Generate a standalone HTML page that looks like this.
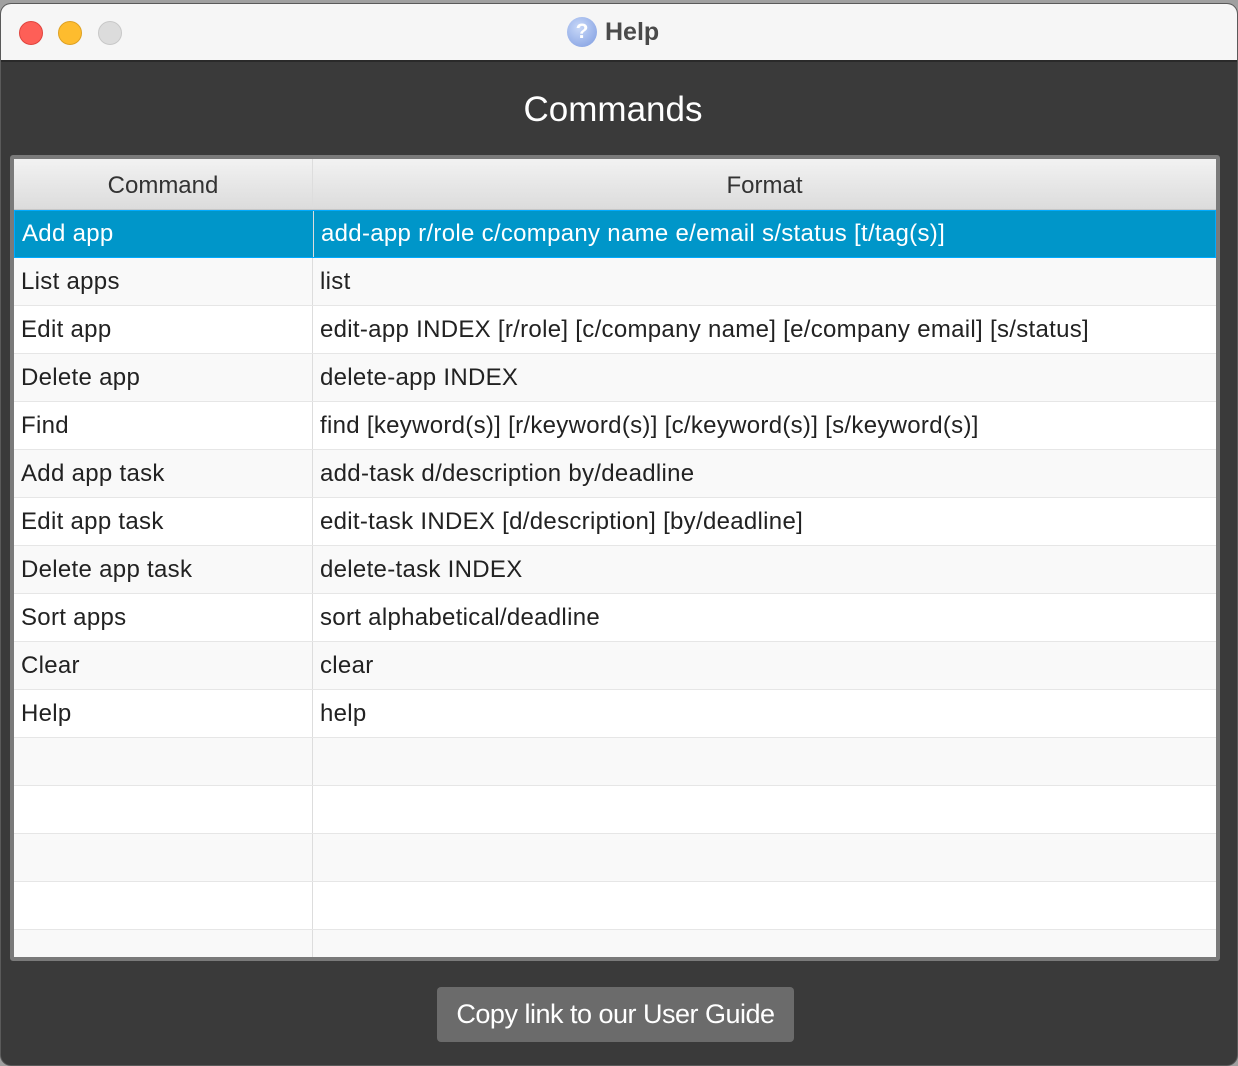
<!DOCTYPE html>
<html><head><style>
*{margin:0;padding:0;box-sizing:border-box}
body{width:1238px;height:1066px;background:#a0a0a0;font-family:"Liberation Sans",sans-serif;overflow:hidden;position:relative}
.win{position:absolute;left:0;top:3px;width:1238px;height:1063px;border-radius:11px;overflow:hidden;background:#3a3a3a;border:1px solid #5a5a5a}
.tb{position:absolute;left:0;top:0;width:100%;height:58px;background:#f6f6f6;border-bottom:2px solid #2a2a2a}
.dot{position:absolute;top:17px;width:24px;height:24px;border-radius:50%}
.title{position:absolute;left:566px;top:13px;font-size:25px;font-weight:bold;color:#4a4a4a;display:flex;align-items:center;gap:8px}
.q{width:30px;height:30px;border-radius:50%;background:radial-gradient(circle at 40% 35%,#c8d8f8,#7d9be0);color:#fff;font-size:21px;display:flex;align-items:center;justify-content:center}
h1{position:absolute;left:-6px;width:100%;top:86px;text-align:center;color:#fff;font-weight:normal;font-size:35px}
.tbl{position:absolute;left:9px;top:151px;width:1210px;height:806px;border:4px solid #7a7a7a;border-radius:3px;background:#f9f9f9;overflow:hidden}
.hd{display:flex;height:51px;background:linear-gradient(#f2f2f2,#dcdcdc);border-bottom:1px solid #c6c6c6}
.hd div{display:flex;align-items:center;justify-content:center;font-size:24px;color:#333;padding-top:4px}
.c1{width:299px;border-right:1px solid #ddd;flex:none}
.c2{flex:1}
.r{display:flex;height:48px;border-bottom:1px solid #e6e6e6;font-size:24px;color:#222;letter-spacing:0.3px}
.r div{display:flex;align-items:center;padding-left:7px}
.r .c2{padding-left:7px}
.r:nth-child(odd){background:#fff}
.r:nth-child(even){background:#f9f9f9}
.r.sel{background:#0096c9;color:#fff;border:1px solid #0af}
.btn{position:absolute;left:436px;top:983px;width:357px;height:55px;background:#6b6b6b;border-radius:4px;color:#fff;font-size:27px;letter-spacing:-0.5px;display:flex;align-items:center;justify-content:center}
</style></head><body>
<div class="win">
<div class="tb">
<div class="dot" style="left:18px;background:#fe5f57;border:1px solid #e0443e"></div>
<div class="dot" style="left:57px;background:#febc2e;border:1px solid #dea123"></div>
<div class="dot" style="left:97px;background:#dcdcdc;border:1px solid #c8c8c8"></div>
<div class="title"><div class="q">?</div>Help</div>
</div>
<h1>Commands</h1>
<div class="tbl">
<div class="hd"><div class="c1">Command</div><div class="c2">Format</div></div>
<div>
<div class="r sel"><div class="c1">Add app</div><div class="c2">add-app r/role c/company name e/email s/status [t/tag(s)]</div></div>
<div class="r"><div class="c1">List apps</div><div class="c2">list</div></div>
<div class="r"><div class="c1">Edit app</div><div class="c2">edit-app INDEX [r/role] [c/company name] [e/company email] [s/status]</div></div>
<div class="r"><div class="c1">Delete app</div><div class="c2">delete-app INDEX</div></div>
<div class="r"><div class="c1">Find</div><div class="c2">find [keyword(s)] [r/keyword(s)] [c/keyword(s)] [s/keyword(s)]</div></div>
<div class="r"><div class="c1">Add app task</div><div class="c2">add-task d/description by/deadline</div></div>
<div class="r"><div class="c1">Edit app task</div><div class="c2">edit-task INDEX [d/description] [by/deadline]</div></div>
<div class="r"><div class="c1">Delete app task</div><div class="c2">delete-task INDEX</div></div>
<div class="r"><div class="c1">Sort apps</div><div class="c2">sort alphabetical/deadline</div></div>
<div class="r"><div class="c1">Clear</div><div class="c2">clear</div></div>
<div class="r"><div class="c1">Help</div><div class="c2">help</div></div>
<div class="r"><div class="c1"></div><div class="c2"></div></div>
<div class="r"><div class="c1"></div><div class="c2"></div></div>
<div class="r"><div class="c1"></div><div class="c2"></div></div>
<div class="r"><div class="c1"></div><div class="c2"></div></div>
<div class="r"><div class="c1"></div><div class="c2"></div></div>
</div>
</div>
<div class="btn">Copy link to our User Guide</div>
</div>
</body></html>
